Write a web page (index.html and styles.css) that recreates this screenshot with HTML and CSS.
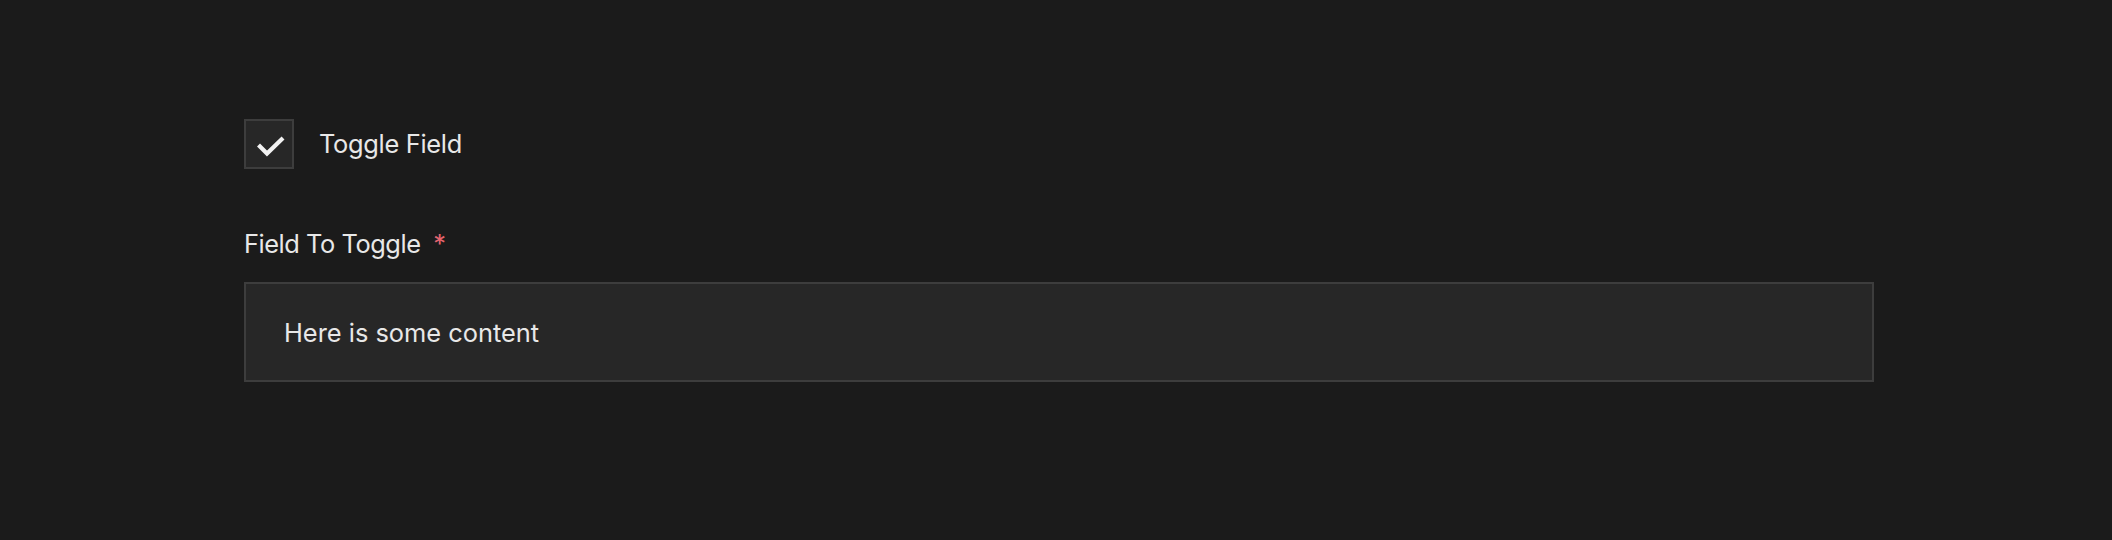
FILE: index.html
```html
<!DOCTYPE html>
<html lang="en">
<head>
<meta charset="utf-8">
<title>Toggle Field</title>
<link rel="stylesheet" href="styles.css">
</head>
<body>
<main class="form">
  <label class="toggle">
    <span class="checkbox">
      <svg class="check" width="50" height="50" viewBox="0 0 50 50" aria-hidden="true">
        <path d="M16 27.5 L23 34.5 L37.5 20.5" fill="none" stroke="#f2f2f2" stroke-width="4.2" stroke-linecap="square" stroke-linejoin="miter"/>
      </svg>
    </span>
    <span class="toggle-label">Toggle Field</span>
  </label>
  <div class="field">
    <div class="field-label">Field To Toggle <span class="req">*</span></div>
    <div class="input">Here is some content</div>
  </div>
</main>
</body>
</html>
```
FILE: styles.css
```css
html, body {
  margin: 0;
  background: #1b1b1b;
}
body {
  font-family: Inter, "Liberation Sans", sans-serif;
  color: #e8e8e8;
  font-size: 25.4px;
}
.form {
  padding: 119px 238px 0 244px;
  display: flex;
  flex-direction: column;
}
.toggle {
  display: flex;
  align-items: center;
  gap: 25px;
}
.checkbox {
  width: 50px;
  height: 50px;
  box-sizing: border-box;
  border: 2px solid #3d3d3d;
  background: #272727;
  position: relative;
  flex: none;
}
.check {
  position: absolute;
  left: -2px;
  top: -2px;
}
.toggle-label {
  line-height: 32px;
  letter-spacing: -0.3px;
}
.field {
  margin-top: 59px;
  display: flex;
  flex-direction: column;
  gap: 22px;
}
.field-label {
  line-height: 32px;
  letter-spacing: -0.45px;
}
.req {
  color: #e5646e;
  margin-left: 6px;
}
.input {
  height: 100px;
  box-sizing: border-box;
  border: 2px solid #3d3d3d;
  background: #272727;
  padding: 0 38px;
  display: flex;
  align-items: center;
}
```
